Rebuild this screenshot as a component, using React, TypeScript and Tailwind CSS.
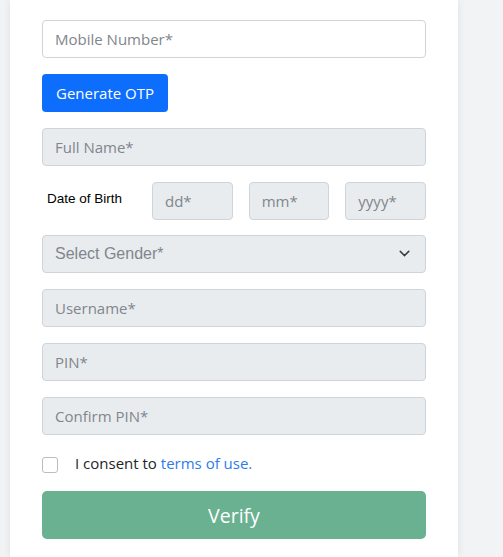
import { ChevronDown } from "lucide-react";

const inputCls =
  "block w-full h-[38px] rounded-[4px] border border-[#ced4da] bg-[#e9ecef] px-3 text-[15px] text-[#212529] placeholder:text-[#80868c] outline-none";

export default function App() {
  return (
    <div
      className="min-h-[557px] bg-[#f1f3f5] pl-[10px]"
      style={{ fontFamily: '"Open Sans", "Noto Sans", sans-serif' }}
    >
      <div className="w-[448px] min-h-[557px] bg-white shadow-[0_0_8px_rgba(0,0,0,0.08)] px-8 pt-5 pb-4">
        <form className="flex flex-col gap-4" onSubmit={(e) => e.preventDefault()}>
          {/* Mobile */}
          <input
            type="text"
            placeholder="Mobile Number*"
            className="block w-full h-[38px] rounded-[4px] border border-[#ced4da] bg-white px-3 text-[15px] placeholder:text-[#80868c] outline-none"
          />
          <div>
            <button
              type="button"
              className="block h-[38px] px-[14px] rounded-[4px] bg-[#0d6efd] text-white text-[15px]"
            >
              Generate OTP
            </button>
          </div>

          <input type="text" placeholder="Full Name*" disabled className={inputCls} />

          {/* Date of birth */}
          <div className="flex items-center -mb-[1px]">
            <label
              className="w-[110px] pl-[5px] text-[13.5px] text-black -mt-1"
              style={{ fontFamily: '"Liberation Sans", Arial, sans-serif' }}
            >
              Date of Birth
            </label>
            <div className="flex-1 flex gap-4">
              <input type="text" placeholder="dd*" disabled className={inputCls} />
              <input type="text" placeholder="mm*" disabled className={inputCls} />
              <input type="text" placeholder="yyyy*" disabled className={inputCls} />
            </div>
          </div>

          {/* Gender */}
          <div className="relative">
            <select
              disabled
              defaultValue=""
              className="block w-full h-[38px] appearance-none rounded-[4px] border border-[#ced4da] bg-[#e9ecef] px-3 text-[16px] text-[#80868c] outline-none"
              style={{ fontFamily: '"Liberation Sans", Arial, sans-serif' }}
            >
              <option value="">Select Gender*</option>
            </select>
            <ChevronDown
              className="absolute right-[13px] top-[10px] w-[17px] h-[17px] text-[#343a40]"
              strokeWidth={2}
            />
          </div>

          <input type="text" placeholder="Username*" disabled className={inputCls} />
          <input type="password" placeholder="PIN*" disabled className={inputCls} />
          <input type="password" placeholder="Confirm PIN*" disabled className={inputCls} />

          {/* Consent */}
          <div className="flex items-center mt-[3px]">
            <input
              type="checkbox"
              className="appearance-none w-4 h-4 border border-[#b9bcc0] rounded-[3px] bg-white"
            />
            <span className="ml-[17px] -mt-[2px] mb-[2px] text-[15px] text-[#212529]">
              I consent to{" "}
              <a href="#" className="text-[#2f7ce8]">
                terms of use.
              </a>
            </span>
          </div>

          <button
            type="submit"
            disabled
            className="block w-full h-[48px] rounded-[5px] bg-[#69b190] text-white text-[19.5px] pt-[3px] -mt-[2px]"
          >
            Verify
          </button>
        </form>
      </div>
    </div>
  );
}
